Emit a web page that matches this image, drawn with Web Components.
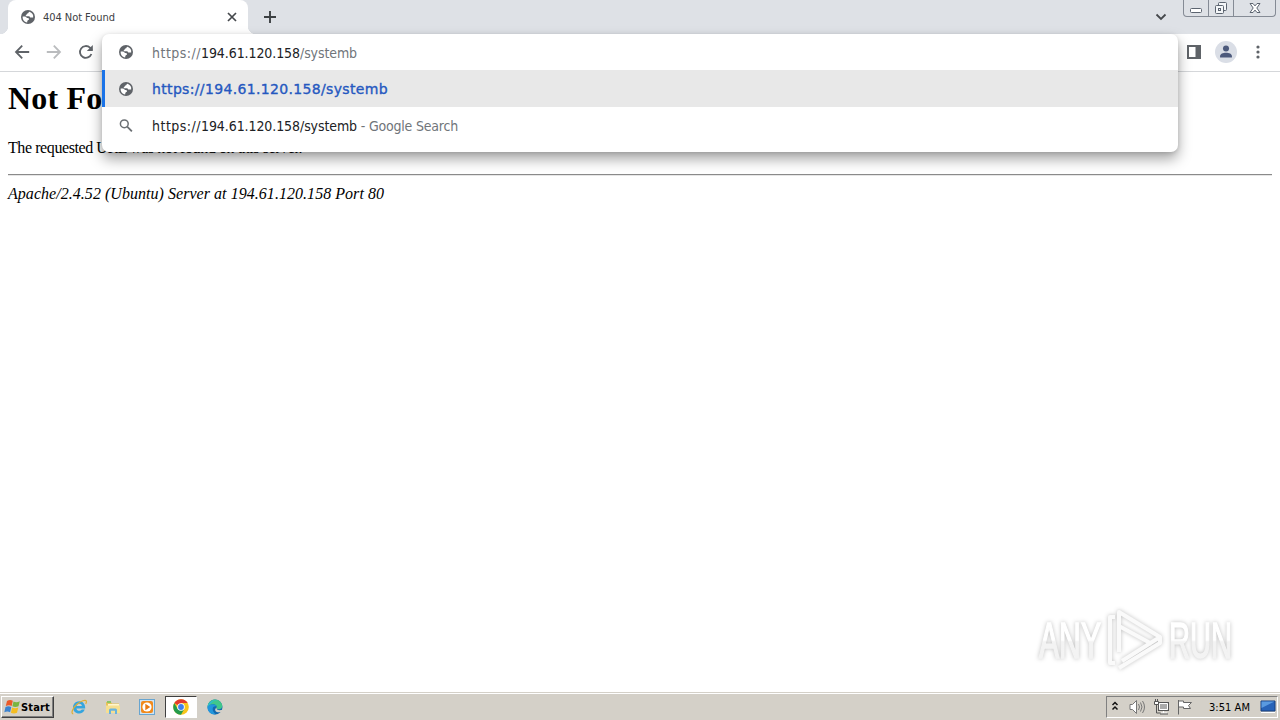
<!DOCTYPE html>
<html lang="en">
<head>
<meta charset="utf-8">
<title>404 Not Found</title>
<style>
    html, body {
        margin: 0;
        height: 100%;
        overflow: hidden;
        background: #fff;
    }

    body {
        display: flex;
        flex-direction: column;
        font-family: "DejaVu Sans Condensed", "DejaVu Sans", sans-serif;
    }

    error-page { flex: 1; }
</style>
</head>
<body>
<tab-strip>404 Not Found</tab-strip>
<tool-bar></tool-bar>
<error-page>
    <span slot="title">Not Found</span>
    <fit-text slot="message" width="294">The requested URL was not found on this server.</fit-text>
    <fit-text slot="server" width="376">Apache/2.4.52 (Ubuntu) Server at 194.61.120.158 Port 80</fit-text>
</error-page>
<task-bar></task-bar>

<script>
function attach(el, html) {
    const template = document.createElement('template');
    template.innerHTML = html;
    el.attachShadow({ mode: 'open' }).appendChild(template.content.cloneNode(true));
}

const ICONS = {
    globe: '<circle cx="8" cy="8" r="7" fill="#5f6368"/><path transform="translate(.7 .7) scale(.91)" d="M9.6 2.2C8.4 2.5 8.8 3.8 7.4 4.2 6.5 4.5 6.8 5.6 5.8 6 5 6.4 5.7 7.2 6.5 7.2H9.2c1 0 .8 1.5 1.9 1.5h2.6A6 6 0 0 0 9.6 2.2zM2.2 7.4c-.5 3.2 1.7 6 4.9 6.6l.2-1.6c.1-1 1.9-.7 1.9-2.1 0-1.1-1.3-.9-2.1-1.1L5 7.5z" fill="#fff"/>',
    back: '<path d="M15.2 8H2M8.2 1.7 2 8l6.2 6.3" fill="none" stroke="#5f6368" stroke-width="1.8"/>',
    forward: '<path d="M.8 8H14M7.8 1.7 14 8l-6.2 6.3" fill="none" stroke="#babcbe" stroke-width="1.8"/>',
    reload: '<path d="M13.4 10A5.9 5.9 0 1 1 12 3.7L14 6" fill="none" stroke="#5f6368" stroke-width="1.8"/><path d="M14.8 1v6H8.8z" fill="#5f6368"/>',
    search: '<circle cx="6.3" cy="5.8" r="3.9" fill="none" stroke="#6b6f73" stroke-width="1.5"/><path d="m9.2 8.7 4.7 4.7" stroke="#6b6f73" stroke-width="1.8"/>',
    close: '<path d="m4 4 8 8M12 4l-8 8" stroke="#45484c" stroke-width="1.7"/>',
    plus: '<path d="M8 2v12M2 8h12" stroke="#3c4043" stroke-width="1.9"/>',
    chevron: '<path d="m3.5 5.5 4.5 4.5 4.5-4.5" fill="none" stroke="#45484c" stroke-width="1.8"/>',
    panel: '<path d="M1 1h14v14H1zM3 3v10h6.5V3z" fill="#5f6368" fill-rule="evenodd"/>',
    dots: '<circle cx="8" cy="3" r="1.6" fill="#5f6368"/><circle cx="8" cy="8" r="1.6" fill="#5f6368"/><circle cx="8" cy="13" r="1.6" fill="#5f6368"/>',
    person: '<circle cx="8" cy="8" r="8" fill="#dadee6"/><circle cx="8" cy="5.5" r="2.2" fill="#4d5a7c"/><path d="M3.7 12V11c0-3.3 8.6-3.3 8.6 0v1z" fill="#4d5a7c"/>',
    minimize: '<rect x="2.5" y="8.5" width="11" height="4" rx="1" fill="#fff" stroke="#5c6470"/>',
    restore: '<g fill="#f4f6f8" stroke="#5c6470"><rect x="5.5" y="2.5" width="8" height="8" rx="1"/><rect x="2.5" y="5.5" width="8" height="8" rx="1"/><rect x="5.5" y="8.5" width="2" height="2"/></g>',
    exit: '<path d="M3 3.5h3l2 2.4 2-2.4h3L9.8 8l3.2 4.5h-3L8 10.1l-2 2.4H3L6.2 8z" fill="#fff" stroke="#5c6470"/>',
    start: '<path d="M3 2q3-1.8 5.800-.2L7.700 6.900Q5 5.500 1.800 7z" fill="#ec5a28"/><path d="M9.500 2.400q2.800 1.600 6.300-.1l-1.300 5q-3.300 1.600-6.100 0z" fill="#79b541"/><path d="M1.500 8q3-1.500 5.800 0l-1.200 5.200q-2.700-1.500-5.800.1z" fill="#3c83cf"/><path d="M8.100 8.500q3 1.500 6.200 0L13 13.700q-3.100 1.500-6.100 0z" fill="#f4bd22"/>',
    ie: '<path d="M14.2 9.4H5.5c.2 2.7 3.8 3.2 5.3 1.2h3c-1 2.6-3.2 3.9-5.6 3.9C4.5 14.5 2 11.700 2 8.4S4.700 2.3 8.2 2.3c3.700 0 6.2 2.800 6 7.1zM5.6 7h5.3C10.700 4.1 5.900 4.1 5.6 7z" fill="#35a5de"/><path d="M2.3 15C-.5 14.5 1.5 9.2 6 5.3 10 2 14.5.3 15.3 2c.3.7 0 1.9-.6 2.9" fill="none" stroke="#dfae32" stroke-width="1.2"/>',
    folder: '<path d="M1 3h5l1 1.5h7V13H1z" fill="#e6c35b"/><path d="M2 2h4v2H2z" fill="#8cc567"/><path d="M3 5h11v2H3z" fill="#fff6cc"/><path d="M1 6.5h14V14H1z" fill="#f6df90"/><path d="M4 15v-4q0-1.5 1.5-1.5h5Q12 9.5 12 11v4h-2v-3.3H6V15z" fill="#69b3dd"/>',
    media: '<rect x=".5" y=".5" width="15" height="15" fill="#cfe4f4" stroke="#68a5d0"/><rect x="2" y="2" width="12" height="12" rx="2" fill="#f18a1c"/><circle cx="8" cy="8" r="4.6" fill="#fff"/><path d="m6.300 4.800 5 3.200-5 3.200z" fill="#e87912"/>',
    chrome: '<circle cx="8" cy="8" r="7.8" fill="#f8c51b"/><path d="M8 8 1.250 4.100A7.800 7.800 0 0 1 14.750 4.100H8z" fill="#e33b2e"/><path d="M1.250 4.100A7.800 7.800 0 0 0 8 15.800L11.25 9.9 8 8 4.75 9.9z" fill="#249b4c"/><circle cx="8" cy="8" r="3.8" fill="#fff"/><circle cx="8" cy="8" r="2.9" fill="#3f80ed"/>',
    edge: '<circle cx="8" cy="8" r="7.5" fill="#1268ae"/><path d="M.5 8C1 .8 9-1.5 13.3 2.7c3 3 2.6 7.3-1.3 7.5-2.5.1-3-.8-2.3-1.8C10.5 5.8 4.5 3 .5 8z" fill="#40c78b"/><path d="M.5 8C1.5 3 7-.5 11.5 1.5 6 .5 4 4.5.5 8z" fill="#2bb9df"/><path d="M.5 8c2-4 8.5-3.5 9.2-.5C5 6 4 12 9 15.4 4 16 .3 12.5.5 8z" fill="#2296dc"/><path d="M9.7 8.4c-1 2 1.5 3.6 6 2.3l-1 2c-4.5 2-9-1.5-5-4.3z" fill="#d4d0c8"/>',
    up: '<path d="m5.5 6 2.5-2.5L10.5 6M5.5 10.5 8 8l2.5 2.5" fill="none" stroke="#111" stroke-width="1.5"/>',
    sound: '<path d="M1 5.500h2.500l4-4v13l-4-4H1z" fill="#fff" stroke="#777"/><path d="M9.500 5q2 3 0 6M11.500 3.500q3 4.500 0 9M13.500 2q4 6 0 12" fill="none" stroke="#777"/>',
    network: '<rect x="5.5" y="3.5" width="10" height="8" fill="#aaa" stroke="#555"/><path d="M6.5 4.5h8v6h-8zM8 14h6M10.5 12v2" fill="none" stroke="#fff"/><path d="M7 15h8" stroke="#555"/><path d="M3.5 5.5V14h4" fill="none" stroke="#555"/><path d="M1.5 2.5h4v3h-4zM2.5 0v2.5M4.5 0v2.5" fill="#fff" stroke="#555"/>',
    flag: '<path d="M1.5 1v14.5M1.5 2h5v1.5h8l-3 3 2 3h-7V8h-5" fill="#fff" stroke="#666"/>',
    desktop: '<path d="M1 2h14v10H1z" fill="#2863b8" stroke="#163f7c"/><path d="M1.5 2.5h13L1.5 9z" fill="#5a9ae0"/><path d="M1 13.5h14" stroke="#fff"/>'
};

// Inline icon, always on a 16 unit grid
customElements.define('ui-icon', class extends HTMLElement {
    constructor() {
        super();
        this.attachShadow({ mode: 'open' });
    }

    connectedCallback() {
        const size = this.getAttribute('size') || 16;
        this.shadowRoot.innerHTML = `
            <style>
                :host { display: block; flex: none; }
                svg { display: block; overflow: visible; }
            </style>
            <svg width="${size}" height="${size}" viewBox="0 0 16 16">${ICONS[this.getAttribute('name')]}</svg>
        `;
    }
});

customElements.define('window-controls', class extends HTMLElement {
    constructor() {
        super();
        attach(this, `
            <style>
                :host {
                    display: flex;
                    box-sizing: border-box;
                    width: 93px;
                    height: 17px;
                    border: 1px solid #858b95;
                    border-top: 0;
                    border-radius: 0 0 4px 4px;
                    overflow: hidden;
                }
                div {
                    display: flex;
                    justify-content: center;
                    width: 25px;
                    box-sizing: border-box;
                    border-right: 1px solid #858b95;
                }
                div:last-child { flex: 1; border: 0; }
            </style>
            <div><ui-icon name="minimize"></ui-icon></div>
            <div><ui-icon name="restore"></ui-icon></div>
            <div><ui-icon name="exit"></ui-icon></div>
        `);
    }
});

customElements.define('tab-strip', class extends HTMLElement {
    constructor() {
        super();
        attach(this, `
            <style>
                :host {
                    display: flex;
                    flex: none;
                    height: 34px;
                    padding-left: 8px;
                    background: #dee1e6;
                    color: #3c4043;
                    font-size: 11px;
                }
                .tab {
                    position: relative;
                    display: flex;
                    align-items: center;
                    box-sizing: border-box;
                    width: 240px;
                    padding: 0 8px 0 12px;
                    border-radius: 8px 8px 0 0;
                    background: #fff;
                }
                .tab::before, .tab::after {
                    content: "";
                    position: absolute;
                    bottom: 0;
                    width: 8px;
                    height: 8px;
                }
                .tab::before { left: -8px; background: radial-gradient(circle at 0 0, transparent 8px, #fff 8.5px); }
                .tab::after { right: -8px; background: radial-gradient(circle at 100% 0, transparent 8px, #fff 8.5px); }
                .label { flex: 1; margin-left: 7px; }
                .plus { margin: 9px 0 0 14px; }
                .chevron { margin: 9px 14px 0 auto; }
                window-controls { margin-right: 4px; }
            </style>
            <div class="tab">
                <ui-icon name="globe"></ui-icon>
                <div class="label"><fit-text width="72"><slot></slot></fit-text></div>
                <ui-icon name="close"></ui-icon>
            </div>
            <ui-icon class="plus" name="plus"></ui-icon>
            <ui-icon class="chevron" name="chevron"></ui-icon>
            <window-controls></window-controls>
        `);
    }
});

customElements.define('suggestion-row', class extends HTMLElement {
    constructor() {
        super();
        attach(this, `
            <style>
                :host {
                    display: flex;
                    align-items: center;
                    box-sizing: border-box;
                    height: 37px;
                    padding-left: 16px;
                    gap: 18px;
                    color: #202124;
                    font-size: 14px;
                    line-height: 20px;
                }
                :host([selected]) {
                    padding-left: 13px;
                    border-left: 3px solid #1a73e8;
                    background: #e8e8e8;
                    color: #2558c0;
                    font-family: "DejaVu Sans", sans-serif;
                }
                .text { display: flex; }
            </style>
            <slot name="icon"></slot>
            <div class="text"><slot></slot></div>
        `);
    }
});

// Address field with its open suggestion list
customElements.define('omni-box', class extends HTMLElement {
    constructor() {
        super();
        attach(this, `
            <style>
                :host {
                    display: block;
                    height: 118px;
                    border-radius: 7px;
                    background: #fff;
                    box-shadow: 0 7px 14px rgba(0, 0, 0, .36), 0 1px 4px rgba(0, 0, 0, .12);
                }
                .input { height: 36px; }
                .input fit-text { padding-top: 1px; }
                .dim { color: #70757a; }
                .selected-text { -webkit-text-stroke: .35px #2558c0; }
            </style>
            <suggestion-row class="input">
                <ui-icon slot="icon" name="globe"></ui-icon>
                <fit-text class="dim" width="49">https://</fit-text>
                <fit-text width="99">194.61.120.158</fit-text>
                <fit-text class="dim" width="57">/systemb</fit-text>
            </suggestion-row>
            <suggestion-row selected>
                <ui-icon slot="icon" name="globe"></ui-icon>
                <fit-text class="selected-text" width="236">https://194.61.120.158/systemb</fit-text>
            </suggestion-row>
            <suggestion-row>
                <ui-icon slot="icon" name="search"></ui-icon>
                <fit-text width="49">https://</fit-text>
                <fit-text width="99">194.61.120.158</fit-text>
                <fit-text width="57">/systemb</fit-text>
                <fit-text class="dim" width="101"> - Google Search</fit-text>
            </suggestion-row>
        `);
    }
});

customElements.define('tool-bar', class extends HTMLElement {
    constructor() {
        super();
        attach(this, `
            <style>
                :host {
                    display: flex;
                    flex: none;
                    align-items: center;
                    box-sizing: border-box;
                    height: 38px;
                    padding: 0 14px 1px;
                    gap: 16px;
                    border-bottom: 1px solid #d5d7da;
                    background: #fff;
                }
                /* the open list hangs over the page below */
                omni-box {
                    position: absolute;
                    top: 34px;
                    left: 102px;
                    width: 1076px;
                    z-index: 1;
                }
                .panel { margin-left: auto; }
                .person { margin-left: -3px; }
                .dots { margin-left: -3px; }
            </style>
            <ui-icon name="back"></ui-icon>
            <ui-icon name="forward"></ui-icon>
            <ui-icon name="reload"></ui-icon>
            <omni-box></omni-box>
            <ui-icon class="panel" name="panel"></ui-icon>
            <ui-icon class="person" name="person" size="22"></ui-icon>
            <ui-icon class="dots" name="dots"></ui-icon>
        `);
    }
});

customElements.define('any-run', class extends HTMLElement {
    constructor() {
        super();
        attach(this, `
            <style>
                :host {
                    display: flex;
                    align-items: center;
                    gap: 5px;
                    font: 400 50px/60px "Liberation Sans Narrow", "Liberation Sans", sans-serif;
                    filter: drop-shadow(0 0 2px rgba(0, 0, 0, .25));
                }
                svg { display: block; overflow: visible; }
                text { fill: url(#fade); stroke: url(#fade); stroke-width: 1.5px; }
            </style>
            <svg width="64" height="50">
                <linearGradient id="fade" x1="0" y1="7" x2="0" y2="43" gradientUnits="userSpaceOnUse">
                    <stop offset=".5" stop-color="#fff"/>
                    <stop offset=".55" stop-color="#f3f3f3"/>
                </linearGradient>
                <text x="1" y="43" textLength="62" lengthAdjust="spacingAndGlyphs">ANY</text>
            </svg>
            <svg width="57" height="62" viewBox="0 0 57 62" fill="none" stroke="#fafafa" stroke-width="4" stroke-linejoin="round">
                <path d="M8 8H3v46h5M12 43V3l41 25-38 24M12 17l33 18M12 59l41-25v-6"/>
            </svg>
            <svg width="64" height="50"><text x="0" y="43" textLength="63" lengthAdjust="spacingAndGlyphs">RUN</text></svg>
        `);
    }
});

customElements.define('error-page', class extends HTMLElement {
    constructor() {
        super();
        attach(this, `
            <style>
                :host {
                    display: block;
                    padding: 8px;
                    background: #fff;
                    color: #000;
                    font: 16px/18px "Liberation Serif", serif;
                }
                h1 { margin: 0; font-size: 32px; line-height: 37px; letter-spacing: .2px; }
                p { height: 18px; margin: 22px 0 17px; }
                hr { margin: 0 0 9px; border: 0; border-top: 1px solid #8a8a8a; border-bottom: 1px solid #e6e6e6; }
                address { font-style: italic; }
                any-run {
                    position: absolute;
                    left: 1038px;
                    top: 609px;
                }
            </style>
            <h1><slot name="title"></slot></h1>
            <p><slot name="message"></slot></p>
            <hr>
            <address><slot name="server"></slot></address>
            <any-run></any-run>
        `);
    }
});

customElements.define('task-bar', class extends HTMLElement {
    constructor() {
        super();
        attach(this, `
            <style>
                :host {
                    display: flex;
                    flex: none;
                    align-items: center;
                    box-sizing: border-box;
                    height: 28px;
                    padding: 1px 2px 0 1px;
                    border-top: 1px solid #d4d0c8;
                    background: #d4d0c8;
                    box-shadow: inset 0 1px #fff;
                    color: #000;
                    font-size: 11px;
                }
                .start {
                    display: flex;
                    align-items: center;
                    box-sizing: border-box;
                    width: 53px;
                    height: 22px;
                    padding-left: 2px;
                    gap: 1px;
                    border: 1px solid;
                    border-color: #fff #404040 #404040 #fff;
                    box-shadow: inset -1px -1px #808080;
                    font-weight: 700;
                }
                .apps { display: flex; margin-left: 9px; gap: 2px; }
                .app {
                    display: flex;
                    align-items: center;
                    justify-content: center;
                    box-sizing: border-box;
                    width: 32px;
                    height: 22px;
                }
                .app.active {
                    border: 1px solid;
                    border-color: #404040 #fff #fff #404040;
                    background: #fff;
                }
                .tray {
                    display: flex;
                    align-items: center;
                    box-sizing: border-box;
                    width: 172px;
                    height: 22px;
                    margin-left: auto;
                    border: 1px solid;
                    border-color: #808080 #fff #fff #808080;
                    gap: 8px;
                }
                .up { margin-right: -2px; }
                .clock { margin-left: 8px; }
                .desktop { margin-left: 2px; }
            </style>
            <div class="start"><ui-icon name="start"></ui-icon><fit-text width="29">Start</fit-text></div>
            <div class="apps">
                <div class="app"><ui-icon name="ie"></ui-icon></div>
                <div class="app"><ui-icon name="folder"></ui-icon></div>
                <div class="app"><ui-icon name="media"></ui-icon></div>
                <div class="app active"><ui-icon name="chrome"></ui-icon></div>
                <div class="app"><ui-icon name="edge"></ui-icon></div>
            </div>
            <div class="tray">
                <ui-icon class="up" name="up"></ui-icon>
                <ui-icon name="sound"></ui-icon>
                <ui-icon name="network"></ui-icon>
                <ui-icon name="flag"></ui-icon>
                <fit-text class="clock" width="41">3:51 AM</fit-text>
                <ui-icon class="desktop" name="desktop"></ui-icon>
            </div>
        `);
    }
});

// Spaces its letters so that the line takes the given width.
// Defined last: it measures text that must already sit in its final slot.
customElements.define('fit-text', class extends HTMLElement {
    constructor() {
        super();
        attach(this, '<style>:host { display: inline-block; white-space: pre; }</style><slot></slot>');
    }

    connectedCallback() {
        const slot = this.shadowRoot.querySelector('slot');
        const text = slot.assignedNodes({ flatten: true }).map(node => node.textContent).join('');
        const width = Number(this.getAttribute('width'));
        const natural = this.getBoundingClientRect().width;
        this.style.letterSpacing = (width - natural) / text.length + 'px';
    }
});
</script>
</body>
</html>
